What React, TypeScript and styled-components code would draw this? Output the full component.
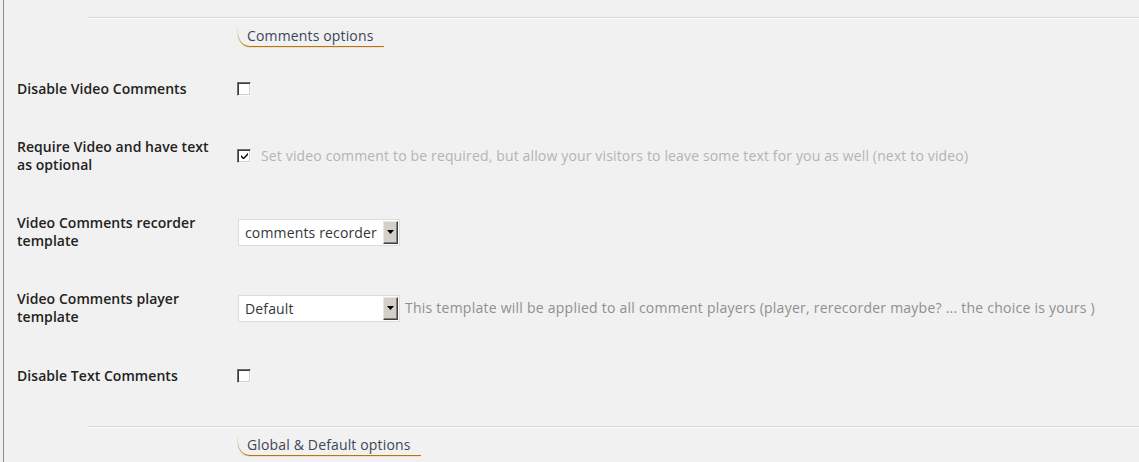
import React from "react";
import styled, { createGlobalStyle } from "styled-components";

const Global = createGlobalStyle`
  html, body { margin: 0; padding: 0; background: #f1f1f1; }
  body { font-family: "Open Sans", "Noto Sans", sans-serif; }
  * { box-sizing: border-box; }
`;

const Page = styled.div`
  margin-left: 3px;
  border-left: 1px solid #8a8a8a;
  height: 462px;
  overflow: hidden;
`;

const Section = styled.section`
  display: flex;
  flex-direction: column;
`;

const Divider = styled.div<{ $top?: number }>`
  margin-left: 83px;
  margin-top: ${(p) => p.$top ?? 0}px;
  height: 2px;
  border-top: 1px solid #d9d9d9;
  border-bottom: 1px solid #fbfbfb;
`;

const HeaderRow = styled.div`
  display: flex;
  padding-left: 234px;
  margin-top: 8px;
`;

const Header = styled.h3`
  margin: 0;
  padding: 0 10px 1px 9px;
  font-size: 14px;
  letter-spacing: 0.15px;
  line-height: 18px;
  font-weight: 400;
  color: #3d4656;
  border-bottom: 1px solid #b8750a;
  border-bottom-left-radius: 12px 14px;
  box-shadow: -1px 1px 0 -0.5px rgba(184, 117, 10, 0.25);
`;

const Rows = styled.div`
  display: flex;
  flex-direction: column;
  margin-top: 13px;
  padding-bottom: 21px;
`;

const Row = styled.div<{ $extra?: number }>`
  display: grid;
  grid-template-columns: 220px 1fr;
  align-items: center;
  padding: ${(p) => 20 + (p.$extra ?? 0)}px 0 20px 13px;
`;

const Label = styled.div`
  width: 200px;
  font-size: 14px;
  letter-spacing: 0.05px;
  line-height: 18px;
  font-weight: 600;
  color: #222;
`;

const Field = styled.div`
  display: flex;
  align-items: center;
`;

const Box = styled.span`
  display: inline-flex;
  align-items: center;
  justify-content: center;
  width: 14px;
  height: 14px;
  background: #fff;
  border-top: 1px solid #6e6e6e;
  border-left: 1px solid #6e6e6e;
  border-right: 1px solid #f8f8f8;
  border-bottom: 1px solid #f8f8f8;
  box-shadow: inset 1px 1px 0 #3a3a3a, inset -1px -1px 0 #d4d0c8;
`;

const Note = styled.span<{ $faint?: boolean; $gap: number; $track: number }>`
  margin-left: ${(p) => p.$gap}px;
  font-size: 14px;
  letter-spacing: ${(p) => p.$track}px;
  line-height: 18px;
  color: ${(p) => (p.$faint ? "#b4b4b4" : "#8f8f8f")};
  white-space: nowrap;
`;

const SelectBox = styled.div`
  display: flex;
  align-items: stretch;
  width: 162px;
  height: 27px;
  margin-left: 1px;
  background: #fff;
  border: 1px solid #dcdcdc;
  padding: 1px;
`;

const SelectText = styled.span`
  flex: 1;
  padding-left: 5px;
  font-size: 14px;
  letter-spacing: 0.15px;
  line-height: 23px;
  color: #32373c;
  white-space: nowrap;
  overflow: hidden;
`;

const SelectButton = styled.span`
  width: 15px;
  display: flex;
  align-items: center;
  justify-content: center;
  background: #d4d0c8;
  border-top: 1px solid #e8e6e1;
  border-left: 1px solid #e8e6e1;
  border-right: 1px solid #404040;
  border-bottom: 1px solid #404040;
  box-shadow: inset -1px -1px 0 #808080;
`;

const Check: React.FC<{ checked?: boolean }> = ({ checked }) => (
  <Box>
    {checked && (
      <svg width="7" height="7" viewBox="0 0 7 7">
        <path d="M0 2 L0 4 L2 6 L3 6 L7 2 L7 0 L2.5 4.5 Z" fill="#000" />
      </svg>
    )}
  </Box>
);

const Select: React.FC<{ value: string }> = ({ value }) => (
  <SelectBox>
    <SelectText>{value}</SelectText>
    <SelectButton>
      <svg width="7" height="4" viewBox="0 0 7 4">
        <path d="M0 0 H7 L3.5 4 Z" fill="#000" />
      </svg>
    </SelectButton>
  </SelectBox>
);

export default function App() {
  return (
    <>
      <Global />
      <Page>
        <Section>
          <Divider $top={17} />
          <HeaderRow>
            <Header>Comments options</Header>
          </HeaderRow>
          <Rows>
            <Row>
              <Label>Disable Video Comments</Label>
              <Field>
                <Check />
              </Field>
            </Row>
            <Row>
              <Label>Require Video and have text as optional</Label>
              <Field>
                <Check checked />
                <Note $faint $gap={10} $track={0.15}>
                  Set video comment to be required, but allow your visitors to leave some text for you as well (next to video)
                </Note>
              </Field>
            </Row>
            <Row>
              <Label>Video Comments recorder template</Label>
              <Field>
                <Select value="comments recorder" />
              </Field>
            </Row>
            <Row>
              <Label>Video Comments player template</Label>
              <Field>
                <Select value="Default" />
                <Note $gap={5} $track={0.24}>
                  This template will be applied to all comment players (player, rerecorder maybe? ... the choice is yours )
                </Note>
              </Field>
            </Row>
            <Row $extra={1}>
              <Label>Disable Text Comments</Label>
              <Field>
                <Check />
              </Field>
            </Row>
          </Rows>
        </Section>
        <Section>
          <Divider />
          <HeaderRow>
            <Header>Global &amp; Default options</Header>
          </HeaderRow>
        </Section>
      </Page>
    </>
  );
}
